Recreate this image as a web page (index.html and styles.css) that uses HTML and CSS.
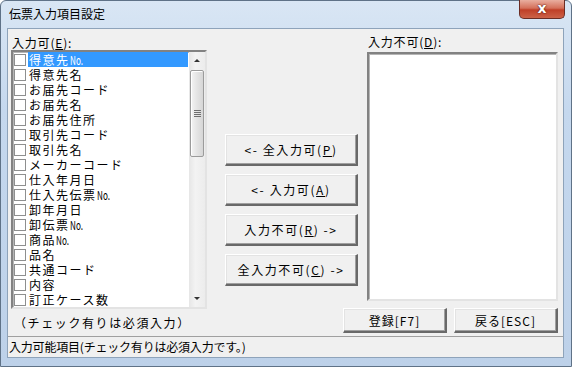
FILE: index.html
```html
<!DOCTYPE html>
<html lang="ja">
<head>
  <meta charset="UTF-8" />
  <title>伝票入力項目設定</title>
  <link rel="stylesheet" href="styles.css">
</head>
<body>
  <div class="window">
    <div class="titlebar">
      <span class="title">伝票入力項目設定</span>
      <div class="close-btn"><span>x</span></div>
    </div>
    <div class="client">
      <div class="panes">
        <div class="col-left">
          <div class="label">入力可(<u>E</u>):</div>
          <div class="listbox">
            <ul class="items">
              <li class="selected"><i class="cb"></i><span>得意先<small>No.</small></span></li>
              <li><i class="cb"></i><span>得意先名</span></li>
              <li><i class="cb"></i><span>お届先コード</span></li>
              <li><i class="cb"></i><span>お届先名</span></li>
              <li><i class="cb"></i><span>お届先住所</span></li>
              <li><i class="cb"></i><span>取引先コード</span></li>
              <li><i class="cb"></i><span>取引先名</span></li>
              <li><i class="cb"></i><span>メーカーコード</span></li>
              <li><i class="cb"></i><span>仕入年月日</span></li>
              <li><i class="cb"></i><span>仕入先伝票<small>No.</small></span></li>
              <li><i class="cb"></i><span>卸年月日</span></li>
              <li><i class="cb"></i><span>卸伝票<small>No.</small></span></li>
              <li><i class="cb"></i><span>商品<small>No.</small></span></li>
              <li><i class="cb"></i><span>品名</span></li>
              <li><i class="cb"></i><span>共通コード</span></li>
              <li><i class="cb"></i><span>内容</span></li>
              <li><i class="cb"></i><span>訂正ケース数</span></li>
            </ul>
            <div class="scrollbar">
              <div class="arrow up"></div>
              <div class="track">
                <div class="thumb"><span class="grip"></span></div>
              </div>
              <div class="arrow down"></div>
            </div>
          </div>
          <div class="note">（チェック有りは必須入力）</div>
        </div>

        <div class="col-mid">
          <button class="btn">&lt;- 全入力可(<u>P</u>)</button>
          <button class="btn">&lt;- 入力可(<u>A</u>)</button>
          <button class="btn">入力不可(<u>R</u>) -&gt;</button>
          <button class="btn">全入力不可(<u>C</u>) -&gt;</button>
        </div>

        <div class="rlabel label">入力不可(<u>D</u>):</div>
        <div class="rlist listbox"></div>
        <div class="actions">
          <button class="btn">登録[F7]</button>
          <button class="btn">戻る[ESC]</button>
        </div>
      </div>
      <div class="statusbar">入力可能項目(チェック有りは必須入力です。)</div>
    </div>
  </div>
</body>
</html>
```

FILE: styles.css
```css
* { margin: 0; padding: 0; box-sizing: border-box; }
body {
  font-family: "Noto Sans CJK JP", "DejaVu Sans", sans-serif;
  font-size: 12px;
  color: #000;
  background: #fff;
}
.window {
  width: 572px;
  height: 367px;
  background: linear-gradient(#d9e6f4, #c5d8ee 30%, #bdd1e9);
  border: 1px solid #5f7287;
  border-radius: 6px 6px 0 0;
  display: flex;
  flex-direction: column;
}
.titlebar {
  height: 28px;
  display: flex;
  justify-content: space-between;
  align-items: flex-start;
  padding-left: 8px;
  padding-right: 6px;
}
.title {
  line-height: 26px;
  font-size: 12px;
}
.close-btn {
  width: 46px;
  height: 19px;
  margin-top: -1px;
  border: 1px solid #6b2d24;
  border-top: none;
  border-radius: 0 0 5px 5px;
  background: linear-gradient(#e9ae9f, #d4705a 45%, #bf3f27 55%, #cc6247);
  display: flex;
  justify-content: center;
  align-items: center;
}
.close-btn span {
  color: #fff;
  font-family: "DejaVu Sans", sans-serif;
  font-weight: bold;
  font-size: 14px;
  line-height: 14px;
  margin-top: -2px;
  text-shadow: 0 0 2px #5a1a10, 0 0 1px #5a1a10;
}
.client {
  flex: 1;
  margin: 0 7px 8px 6px;
  background: #f0f0f0;
  border: 1px solid #8ea3ba;
  display: flex;
  flex-direction: column;
}
.panes {
  flex: 1;
  display: grid;
  grid-template-columns: 196px 18px 118px 15px 9px 191px;
  grid-template-rows: 23px 249px 1fr;
  grid-template-areas:
    "left . . . . rlabel"
    "left . mid mid . rlist"
    "left . . act act act";
  padding-left: 3px;
}
.label {
  letter-spacing: 0.8px;
  line-height: 14px;
  padding-top: 7px;
  padding-left: 1px;
}
.col-left {
  grid-area: left;
  display: flex;
  flex-direction: column;
}
.col-left .label { height: 21px; }
.listbox {
  background: #fff;
  border-style: solid;
  border-width: 2px;
  border-color: #828282 #e3e3e3 #e3e3e3 #828282;
  box-shadow: inset 1px 1px 0 #b5b5b5;
}
.col-left .listbox {
  height: 259px;
  display: flex;
}
.items {
  list-style: none;
  flex: 1;
}
.items li {
  height: 15px;
  display: flex;
  align-items: center;
  padding-left: 1px;
  padding-right: 1px;
  letter-spacing: 1.5px;
  font-size: 12px;
  line-height: 15px;
}
.items li span {
  flex: 1;
  height: 15px;
  padding-left: 1px;
  white-space: nowrap;
  overflow: hidden;
}
.items li small {
  font-size: 12px;
  letter-spacing: 0;
  display: inline-block;
  transform: scaleX(0.68);
  transform-origin: left;
}
.items li.selected span {
  background: #3399ff;
  color: #fff;
}
.cb {
  width: 12px;
  height: 12px;
  border: 1px solid #8e8f8f;
  background: #fff;
  margin-right: 2px;
  flex-shrink: 0;
}
.scrollbar {
  width: 16px;
  display: flex;
  flex-direction: column;
  background: linear-gradient(to right, #e6e6e6, #f3f3f3 40%, #ececec);
}
.arrow {
  height: 17px;
  display: flex;
  justify-content: center;
  align-items: center;
}
.arrow::after {
  content: "";
  border-left: 3px solid transparent;
  border-right: 3px solid transparent;
}
.arrow.up::after { border-bottom: 3px solid #333; }
.arrow.down::after { border-top: 3px solid #333; }
.track {
  flex: 1;
  padding: 1px 1px 0 1px;
}
.thumb {
  height: 87px;
  border: 1px solid #9b9b9b;
  border-radius: 2px;
  background: linear-gradient(to right, #f4f4f4, #e4e4e4 50%, #d6d6d6);
  box-shadow: inset 1px 1px 0 #fff;
  display: flex;
  justify-content: center;
  align-items: center;
}
.grip {
  width: 7px;
  height: 7px;
  background: repeating-linear-gradient(#6f6f6f 0 1px, transparent 1px 2px);
}
.note {
  padding-left: 3px;
  padding-top: 7px;
  letter-spacing: 1.6px;
  line-height: 14px;
}
.col-mid {
  grid-area: mid;
  width: 133px;
  padding-top: 82px;
  display: flex;
  flex-direction: column;
  gap: 8px;
  position: relative;
  z-index: 1;
}
.btn {
  font-family: inherit;
  font-size: 12px;
  letter-spacing: 1.6px;
  color: #000;
  background: #f0f0f0;
  border-style: solid;
  border-width: 1px 2px 2px 1px;
  border-color: #fff #696969 #696969 #fff;
  box-shadow: inset -1px -1px 0 #a0a0a0, inset 1px 1px 0 #e3e3e3;
}
.col-mid .btn { height: 32px; }
.btn u { text-decoration: underline; text-underline-offset: 1px; }
.rlabel {
  grid-area: rlabel;
  padding-left: 1px;
  padding-top: 6px;
}
.rlist {
  grid-area: rlist;
}
.actions {
  grid-area: act;
  display: flex;
  gap: 7px;
  padding-top: 7px;
  padding-bottom: 3px;
}
.actions .btn {
  flex: 1;
  height: 25px;
  letter-spacing: 1px;
}
.statusbar {
  height: 21px;
  border-top: 1px solid #a0a0a0;
  line-height: 19px;
  padding-left: 1px;
  letter-spacing: -0.2px;
}
```
